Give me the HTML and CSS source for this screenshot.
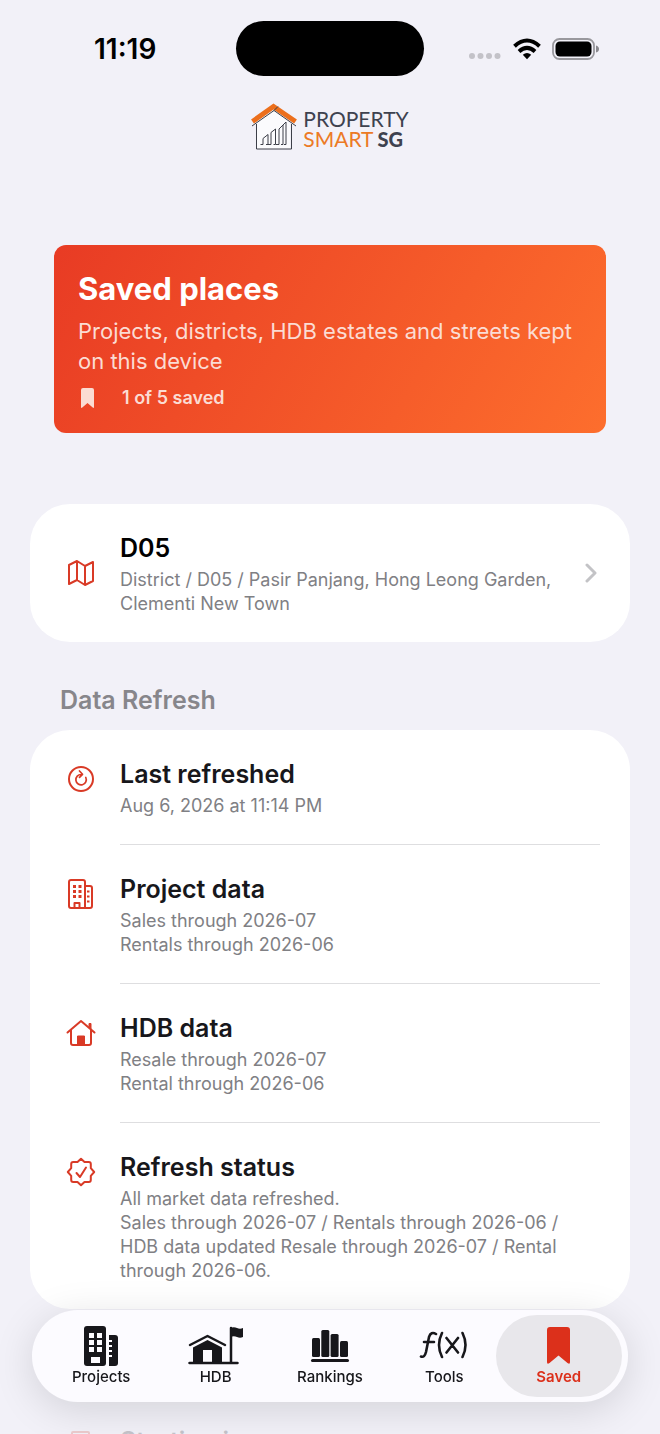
FILE: index.html
```
<!DOCTYPE html>
<html lang="en">
<head>
    <meta charset="UTF-8">
    <meta name="viewport" content="width=device-width, initial-scale=1.0">
    <title>Saved places - Property Smart SG</title>
    <link rel="stylesheet" href="styles.css">
</head>
<body>

    <!-- Status bar -->
    <div class="status-bar">
        <span class="clock">11:19</span>
        <span class="island"></span>
        <span class="indicators">
            <svg class="signal" width="34" height="8" viewBox="0 0 34 8" fill="#c3c2c8">
                <circle cx="4" cy="4" r="3"/><circle cx="12.500" cy="4" r="3"/><circle cx="21" cy="4" r="3"/><circle cx="29.500" cy="4" r="3"/>
            </svg>
            <svg width="28" height="22" viewBox="0 0 28 22" fill="none" stroke="#000" stroke-width="4">
                <path d="M1.500 8.200Q14-3.200 26.500 8.200"/>
                <path d="M6 13.500Q14 6.300 22 13.500"/>
                <path d="M14 21.200l-4.200-4.400q4.200-3.600 8.400 0z" fill="#000" stroke="none"/>
            </svg>
            <svg width="48" height="22" viewBox="0 0 48 22">
                <rect x="1" y="1" width="41" height="20" rx="6.500" fill="none" stroke="#99989d" stroke-width="1.800"/>
                <rect x="3.500" y="3.500" width="36" height="15" rx="4.500" fill="#000"/>
                <path d="M44 7.500q3 1 3 3.500t-3 3.500z" fill="#8a898e"/>
            </svg>
        </span>
    </div>

    <main class="content">
        <!-- Logo -->
        <div class="logo">
            <svg width="46" height="48" viewBox="0 0 46 48" fill="none">
                <path d="M6 20L23 7l16 13v26H6z" fill="#fbfbfd"/>
                <path d="M1.500 18.500L22.500 3.500l22 15" stroke="#ec6f1c" stroke-width="5"/>
                <path d="M1 23L23 7.500 45 23M5.500 21v25h35V21M23 7.500l4-4" stroke="#3c3f48" stroke-width="1"/>
                <path d="M9.500 41.500h2.500v-6l5-4v10h-2M17 41.500h3v-12l4.500-3.500v15.500h-2M25 41.500h3V26l4-4v19.500h-2M32 22l3-3v22.500h-2" stroke="#3c3f48" stroke-width="1"/>
            </svg>
            <div class="logo-text">
                <span>PROPERTY</span>
                <span class="logo-smart">SMART <b>SG</b></span>
            </div>
        </div>

        <!-- Hero -->
        <section class="hero">
            <h1>Saved places</h1>
            <p>Projects, districts, HDB estates and streets kept on this device</p>
            <div class="hero-count">
                <svg width="20" height="20" viewBox="0 0 20 20" fill="#fbdcd3"><path d="M3 2q0-2 2-2h9q2 0 2 2v17q0 1.500-1.300.5L9.500 15l-5.200 4.500Q3 20.500 3 19z"/></svg>
                <span>1 of 5 saved</span>
            </div>
        </section>

        <!-- Saved items -->
        <div class="card">
            <a href="#" class="row row-link">
                <span class="row-icon">
                    <svg width="28" height="28" viewBox="0 0 28 28"><path d="M2 6L10 2l8 5 8-4v19l-8 4-8-5-8 4zM10 2v19M18 7v19"/></svg>
                </span>
                <span class="row-text">
                    <strong>D05</strong>
                    <span>District / D05 / Pasir Panjang, Hong Leong Garden, Clementi New Town</span>
                </span>
                <svg class="chevron" width="12" height="20" viewBox="0 0 12 20"><path d="M2 2l8 8-8 8"/></svg>
            </a>
        </div>

        <!-- Data refresh -->
        <h2>Data Refresh</h2>
        <div class="card">
            <div class="row">
                <span class="row-icon">
                    <svg width="28" height="28" viewBox="0 0 28 28"><circle cx="14" cy="14" r="12"/><path d="M18.800 12.500a5.200 5.200 0 1 1-4.500-3h.7M12.500 6l3 3.300-3 3" stroke-width="1.700"/></svg>
                </span>
                <div class="row-text">
                    <h3>Last refreshed</h3>
                    <p>Aug 6, 2026 at 11:14 PM</p>
                </div>
            </div>
            <div class="row">
                <span class="row-icon">
                    <svg width="28" height="32" viewBox="0 0 28 32">
                        <path d="M4 2h12q2 0 2 2v26H4q-2 0-2-2V4q0-2 2-2zM18 8h5q2 0 2 2v18q0 2-2 2h-5M7.500 30v-5h5v5"/>
                        <path d="M6 8.500h3M11.500 8.500h3M6 13.500h3M11.500 13.500h3M6 18.500h3M11.500 18.500h3" stroke-width="3" stroke-linecap="butt"/>
                        <path d="M20 13.500h2.500M20 18.500h2.500M20 23.500h2.500" stroke-width="2" stroke-linecap="butt"/>
                    </svg>
                </span>
                <div class="row-text">
                    <h3>Project data</h3>
                    <p>Sales through 2026-07<br>Rentals through 2026-06</p>
                </div>
            </div>
            <div class="row">
                <span class="row-icon">
                    <svg width="30" height="28" viewBox="0 0 30 28">
                        <path d="M1.500 13.500L15 2l13.500 11.500M5 11v13q0 2 2 2h16q2 0 2-2V11"/>
                        <path d="M11.500 26v-9h7v9zM23 7.500V4.500h2v5z" fill="#d93a26" stroke-width="1"/>
                    </svg>
                </span>
                <div class="row-text">
                    <h3>HDB data</h3>
                    <p>Resale through 2026-07<br>Rental through 2026-06</p>
                </div>
            </div>
            <div class="row">
                <span class="row-icon">
                    <svg width="30" height="30" viewBox="0 0 30 30"><path d="M15 1.800l3.500 3.300h4.300q2 0 2 2v4.100l3.400 3.800-3.400 3.800v4.100q0 2-2 2h-4.300L15 28.200l-3.500-3.300H7.200q-2 0-2-2v-4.100L1.800 15l3.400-3.800V7.100q0-2 2-2h4.300zM10.500 16l3.500 4 6-9.500"/></svg>
                </span>
                <div class="row-text">
                    <h3>Refresh status</h3>
                    <p>All market data refreshed.<br>Sales through 2026-07 / Rentals through 2026-06 / HDB data updated Resale through 2026-07 / Rental through 2026-06.</p>
                </div>
            </div>
        </div>

        <!-- Next section, scrolled under the tab bar -->
        <div class="next-section">
            <span class="row-icon">
                <svg width="20" height="20" viewBox="0 0 20 20"><rect x="1" y="1" width="17" height="17" rx="1"/></svg>
            </span>
            <h3>Starting in</h3>
        </div>
    </main>

    <!-- Tab bar -->
    <nav class="tab-bar">
        <a href="#" class="tab">
            <svg width="36" height="40" viewBox="0 0 36 40">
                <path d="M4 0h16q3 0 3 3v34q0 3-3 3H4q-3 0-3-3V3q0-3 3-3z"/>
                <path d="M26 9h6q3 0 3 3v25q0 3-3 3h-6z"/>
                <path d="M6 7h5v5H6zM14 7h5v5h-5zM6 14h5v5H6zM14 14h5v5h-5zM6 21h5v5H6zM14 21h5v5h-5zM8 31h9v6H8zM25 14h4v2h-4zM25 19h4v2h-4zM25 24h4v2h-4zM25 29h4v2h-4z" fill="#fcfbff"/>
            </svg>
            <span>Projects</span>
        </a>
        <a href="#" class="tab">
            <svg width="56" height="40" viewBox="0 0 56 40">
                <path d="M5 36V21.500L19.500 14 34 21.500V36z"/>
                <path d="M15 24h9v12h-9z" fill="#fcfbff"/>
                <path d="M2 19L19.500 10 37 19M1.500 37h48M43 2v34" fill="none" stroke="#17171b" stroke-width="2.500" stroke-linecap="round" stroke-linejoin="round"/>
                <path d="M42 2q4-1.500 7 0t6 0v9q-3 1.500-6 0t-7 0z"/>
            </svg>
            <span>HDB</span>
        </a>
        <a href="#" class="tab">
            <svg width="40" height="40" viewBox="0 0 40 40">
                <rect x="2" y="12" width="8" height="19" rx="1.500"/>
                <rect x="11.300" y="4" width="8" height="27" rx="1.500"/>
                <rect x="20.600" y="8" width="8" height="23" rx="1.500"/>
                <rect x="30" y="15" width="8" height="16" rx="1.500"/>
                <rect x="1" y="33" width="38" height="3" rx="1.500"/>
            </svg>
            <span>Rankings</span>
        </a>
        <a href="#" class="tab">
            <svg width="50" height="40" viewBox="0 0 50 40" fill="none" stroke="#17171b" stroke-width="2.600" stroke-linecap="round">
                <path d="M17 8q-5-3-7 3L7 26q-1.500 6-5 4.500M5 16h10M23 7q-6 12 0 24M43.500 7q6 12 0 24M27.500 12l11.500 14.500M39 12L27.500 26.500"/>
            </svg>
            <span>Tools</span>
        </a>
        <a href="#" class="tab active">
            <svg width="26" height="40" viewBox="0 0 26 40"><path d="M1 4q0-3 3-3h17q3 0 3 3v32q0 3-2.500 1L12.500 29.500 3.500 37Q1 39 1 36z"/></svg>
            <span>Saved</span>
        </a>
    </nav>

</body>
</html>
```
FILE: styles.css
```
* {
    box-sizing: border-box;
}

body {
    font-family: Inter, "Liberation Sans", sans-serif;
    margin: 0;
    height: 100vh;
    overflow: hidden;
    display: flex;
    flex-direction: column;
    background-color: #f2f1f8;
    color: #17171b;
}

h1, h2, h3, p {
    margin: 0;
}

a {
    color: inherit;
    text-decoration: none;
}

/* Status bar */
.status-bar {
    display: grid;
    grid-template-columns: 1fr 188px 1fr;
    align-items: center;
    flex-shrink: 0;
    padding: 21px 60px 0;
}

.clock {
    padding-left: 34px;
    font-size: 28px;
    font-weight: 600;
    color: #000;
}

.island {
    height: 55px;
    border-radius: 28px;
    background-color: #000;
}

.indicators {
    display: flex;
    align-items: center;
    justify-content: flex-end;
    gap: 11px;
}

.signal {
    margin-top: 14px;
}

/* Content */
.content {
    flex: 1;
    min-height: 0;
    overflow-y: auto;
    scrollbar-width: none;
    padding: 26px 30px 0;
}

.logo {
    display: flex;
    justify-content: center;
    align-items: center;
    gap: 6px;
    height: 50px;
}

.logo-text {
    display: flex;
    flex-direction: column;
    padding-top: 3px;
    font-family: Lato, sans-serif;
    font-size: 21px;
    line-height: 20px;
    color: #3e424f;
}

.logo-smart {
    display: flex;
    gap: 4px;
    color: #ec7a25;
}

.logo-smart b {
    color: #3e424f;
    font-size: 20px;
    font-weight: 900;
}

.hero {
    margin: 93px 24px 71px;
    padding: 25px 24px 21px;
    border-radius: 12px;
    background-image: linear-gradient(120deg, #e83b24, #fd6e2d);
    color: #fbdcd3;
    display: flex;
    flex-direction: column;
    gap: 8px;
}

.hero h1 {
    font-size: 31px;
    line-height: 38px;
    color: #fff;
}

.hero p {
    font-size: 22px;
    line-height: 30px;
}

.hero-count {
    display: flex;
    align-items: center;
    gap: 24px;
    font-size: 18px;
    font-weight: 600;
    line-height: 28px;
}

/* Cards */
.card {
    background-color: #fff;
    border-radius: 40px;
}

.row {
    display: flex;
    gap: 18px;
    padding: 0 30px;
}

.row-icon {
    display: flex;
    align-items: center;
    justify-content: center;
    flex-shrink: 0;
    width: 42px;
    height: 42px;
}

.row > .row-icon {
    margin-top: 28px;
}

.row-link {
    align-items: center;
}

.row-link > .row-icon {
    margin-top: 0;
}

.row-icon svg {
    fill: none;
    stroke: #d93a26;
    stroke-width: 2;
    stroke-linecap: round;
    stroke-linejoin: round;
}

.row-text {
    flex: 1;
    display: flex;
    flex-direction: column;
    gap: 4px;
    padding: 28px 0 26px;
    font-size: 18px;
    line-height: 24px;
    color: #808084;
}

.row:not(:last-child) .row-text {
    border-bottom: 1px solid #dedee0;
}

.row-text strong, h3 {
    font-size: 25px;
    font-weight: 600;
    line-height: 32px;
    color: #17171b;
}

.row-text strong {
    color: #000;
}

.chevron {
    fill: none;
    stroke: #c3c3c6;
    stroke-width: 3;
    stroke-linecap: round;
    stroke-linejoin: round;
    margin-right: 3px;
}

h2 {
    padding: 42px 30px 14px;
    font-size: 25px;
    font-weight: 600;
    line-height: 32px;
    color: #87868b;
}

.next-section {
    display: flex;
    align-items: center;
    gap: 18px;
    margin-top: 111px;
    padding: 0 30px;
    opacity: 0.2;
}

/* Tab bar */
.tab-bar {
    position: fixed;
    left: 32px;
    right: 32px;
    bottom: 32px;
    display: grid;
    grid-template-columns: repeat(5, 1fr);
    padding: 5px 12px;
    border-radius: 46px;
    background-color: #fcfbff;
    box-shadow: 0 8px 40px rgba(0, 0, 0, 0.13);
}

.tab {
    display: flex;
    flex-direction: column;
    align-items: center;
    margin: 0 -6px;
    padding: 11px 0 9px;
    height: 82px;
    border-radius: 41px;
    font-size: 15px;
    font-weight: 500;
    line-height: 22px;
    fill: #17171b;
}

.tab.active {
    background-color: #e8e7eb;
    color: #dc301b;
    fill: #dc301b;
    font-weight: 600;
}
```
